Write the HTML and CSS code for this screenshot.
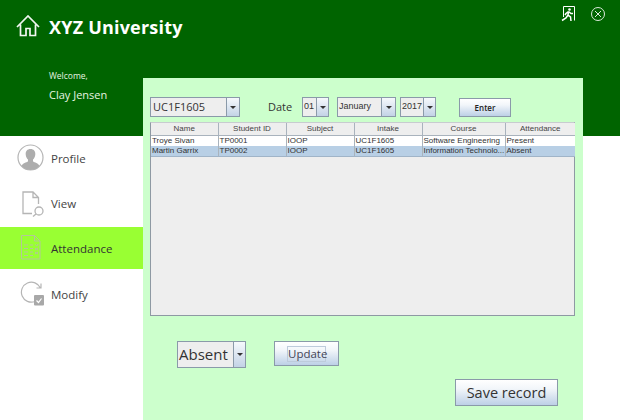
FILE: index.html
```html
<!DOCTYPE html>
<html lang="en">
<head>
<meta charset="utf-8">
<title>XYZ University</title>
<link rel="stylesheet" href="styles.css">
</head>
<body>
<div class="app">
  <header class="header">
    <div class="brand">
      <svg class="home" width="24" height="24" viewBox="0 0 24 24" fill="none" stroke="#f2f7f2" stroke-width="1.7"><path d="M1 12 12 1 23 12M4.500 9.500v11h5.500v-7h4v7h5.500v-11"/></svg>
      <h1 class="title">XYZ University</h1>
    </div>
    <div class="greeting">
      <div class="welcome">Welcome,</div>
      <div class="user">Clay Jensen</div>
    </div>
    <div class="window-icons">
      <svg width="14" height="16" viewBox="0 0 14 16" fill="none" stroke="#fff"><path d="M2.500 11V.5h11v14" /><circle cx="8.500" cy="3.500" r="1.300" fill="#fff" stroke="none"/><path d="M7.500 5.500 5 7.500l-1 1.500M7.500 5.500 7 9l2.500 2 .5 4M7 9l-2 3-4 2.500M7.500 5.500l2.500 2h2" stroke-width="1.500"/></svg>
      <svg width="14" height="14" viewBox="0 0 14 14" fill="none" stroke="#dbe9db"><circle cx="7" cy="7" r="6.500"/><path d="M4 4l6 6M10 4l-6 6"/></svg>
    </div>
  </header>
  <nav class="sidebar">
    <div class="nav-item nav-profile">
      <svg class="nav-icon" width="27" height="27" viewBox="0 0 27 27"><circle cx="13.500" cy="13.500" r="12.500" fill="#fff" stroke="#b5b5b5" stroke-width="1.200"/><path d="M13.500 5c3.500 0 5 2.600 4.800 5.500-.2 2.400-1.200 4-2.300 5v2c1.500 1 5.500 1.700 6.500 4.400a12 12 0 0 1-18 0c1-2.700 5-3.400 6.500-4.400v-2c-1.100-1-2.100-2.600-2.300-5C8.500 7.600 10 5 13.500 5z" fill="#adadad"/></svg>
      <span>Profile</span>
    </div>
    <div class="nav-item nav-view">
      <svg class="nav-icon" width="24" height="26" viewBox="0 0 24 26" fill="none" stroke="#b5b5b5" stroke-width="1.300"><path d="M10 22.500H1V1h10l5.500 5.500V13M11 1v5.500h5.500"/><circle cx="17" cy="20" r="4"/><path d="M14 23l-3 2.500"/></svg>
      <span>View</span>
    </div>
    <div class="nav-item nav-attendance active">
      <svg class="nav-icon" width="20" height="25" viewBox="0 0 20 25" fill="none" stroke="#b4c79a" stroke-width="1"><path d="M.500.500h13l5.500 5.500v18H.500zM13.500.500V6H19M3 10h4M9 10h3M3 13.500h4M9 13.500h3M3 17h4M9 17h3M3 20.500h4M9 20.500h3M14 9.500l2 1.500 1-2M14 13l3 2M17 13l-3 2M14 17l3 2M17 17l-3 2"/></svg>
      <span>Attendance</span>
    </div>
    <div class="nav-item nav-modify">
      <svg class="nav-icon" width="26" height="26" viewBox="0 0 26 26" fill="none"><path d="M16 20.500A10 10 0 1 1 21.500 7M17.500 7h4.500V2.500" stroke="#b5b5b5" stroke-width="1.200"/><rect x="15" y="14" width="10" height="10.500" rx="1" fill="#a8a8a8"/><path d="M17.500 19.500l2 2 3-4" stroke="#fff" stroke-width="1.200"/></svg>
      <span>Modify</span>
    </div>
  </nav>
  <main class="panel">
    <div class="toolbar">
      <div class="combo combo-course"><span class="combo-value">UC1F1605</span><span class="combo-arrow"></span></div>
      <span class="date-label">Date</span>
      <div class="combo combo-day"><span class="combo-value">01</span><span class="combo-arrow"></span></div>
      <div class="combo combo-month"><span class="combo-value">January</span><span class="combo-arrow"></span></div>
      <div class="combo combo-year"><span class="combo-value">2017</span><span class="combo-arrow"></span></div>
      <button class="btn btn-enter" type="button">Enter</button>
    </div>
    <div class="table-box">
      <table class="grid">
        <colgroup>
          <col class="c1"><col class="c2"><col class="c3"><col class="c4"><col class="c5"><col class="c6">
        </colgroup>
        <thead>
          <tr><th>Name</th><th>Student ID</th><th>Subject</th><th>Intake</th><th>Course</th><th>Attendance</th></tr>
        </thead>
        <tbody>
          <tr><td>Troye Sivan</td><td>TP0001</td><td>IOOP</td><td>UC1F1605</td><td>Software Engineering</td><td>Present</td></tr>
          <tr class="selected"><td>Martin Garrix</td><td>TP0002</td><td>IOOP</td><td>UC1F1605</td><td>Information Technolo...</td><td>Absent</td></tr>
        </tbody>
      </table>
    </div>
    <div class="update-row">
      <div class="combo combo-status"><span class="combo-value">Absent</span><span class="combo-arrow"></span></div>
      <button class="btn btn-update" type="button"><span class="focus">Update</span></button>
    </div>
    <div class="save-row">
      <button class="btn btn-save" type="button">Save record</button>
    </div>
  </main>
</div>
</body>
</html>
```
FILE: styles.css
```css
* { box-sizing: border-box; }
html, body { margin: 0; padding: 0; }
body { width: 620px; height: 420px; overflow: hidden; background: #fff; font-family: "Open Sans", "Noto Sans", sans-serif; }

.app { position: relative; width: 620px; height: 420px; display: grid; grid-template-rows: 136px 1fr; grid-template-columns: 143px 1fr; }

.header { grid-column: 1 / 3; background: #006400; color: #fff; position: relative; padding: 15px 0 0 16px; }
.brand { display: flex; align-items: center; gap: 9px; height: 24px; }
.home { flex: none; }
.title { margin: 0; font-size: 18px; font-weight: 700; line-height: 24px; letter-spacing: 0.2px; }
.greeting { margin: 30px 0 0 33px; color: #e6f5e0; }
.welcome { font-size: 8.500px; line-height: 14px; }
.user { font-size: 11px; line-height: 18px; margin-top: 3px; }
.window-icons { position: absolute; top: 6px; left: 561px; display: flex; gap: 16px; align-items: center; }

.sidebar { display: flex; flex-direction: column; background: #fff; }
.nav-item { display: flex; align-items: center; font-size: 11.500px; color: #444; position: relative; padding-left: 51px; }
.nav-icon { position: absolute; }
.nav-profile { height: 45px; }
.nav-profile .nav-icon { left: 17px; top: 8px; }
.nav-view { height: 46px; padding-bottom: 1px; }
.nav-view .nav-icon { left: 22px; top: 10px; }
.nav-attendance { height: 42px; padding-top: 1px; }
.nav-attendance .nav-icon { left: 21px; top: 8px; }
.nav-modify { height: 50px; }
.nav-modify .nav-icon { left: 19px; top: 12px; }
.active { background: #99ff33; color: #333; }

.panel { position: absolute; left: 143px; top: 78px; width: 440px; height: 342px; background: #ccffcc; padding: 19px 8px 0 7px; display: flex; flex-direction: column; }

.toolbar { display: flex; align-items: flex-start; height: 25px; }
.combo { display: flex; border: 1px solid #8a9aa9; background: #eeeeee; color: #333; flex: none; }
.combo-value { flex: 1; display: block; overflow: hidden; white-space: nowrap; font-family: "Open Sans", sans-serif; }
.combo-arrow { flex: none; display: flex; align-items: center; justify-content: center; border-left: 1px solid #8a9aa9; background: linear-gradient(#f6f9fc, #c3d3e6); width: 12px; }
.combo-arrow::after { content: ""; border: 3px solid transparent; border-top: 3px solid #333; border-bottom: 0; }
.combo-course { width: 90px; height: 20px; }
.combo-course .combo-value { font-size: 11px; line-height: 18px; padding-left: 2px; }
.combo-course .combo-arrow { width: 13px; }
.date-label { font-size: 11px; line-height: 20px; color: #333; margin-left: 28px; width: 34px; }
.combo-day { width: 27px; height: 20px; }
.combo-month { width: 59px; height: 20px; margin-left: 8px; }
.combo-year { width: 36px; height: 20px; margin-left: 4px; }
.combo-day .combo-value, .combo-month .combo-value, .combo-year .combo-value { font-family: "Liberation Sans", sans-serif; font-size: 9px; line-height: 16px; padding-left: 1px; }
.combo-month .combo-arrow { width: 14px; margin-left: auto; }
.combo-day .combo-arrow, .combo-year .combo-arrow { width: 12px; }

.btn { display: block; border: 1px solid #8a9aa9; background: linear-gradient(#ffffff 0%, #f2f6fa 35%, #bdd0e6 100%); color: #333; padding: 0; font-family: "Open Sans", sans-serif; }
.btn-enter { width: 52px; height: 19px; margin-left: 23px; margin-top: 1px; font-size: 8px; font-weight: 600; color: #222; }

.table-box { width: 425px; height: 194px; border: 1px solid #8e99a3; border-top-color: #c8ccd0; background: #eeeeee; }
.grid { border-collapse: collapse; table-layout: fixed; width: 424px; font-family: "Liberation Sans", sans-serif; font-size: 8px; color: #333; }
.c1 { width: 67px; }
.c2, .c3, .c4 { width: 68px; }
.c5 { width: 83px; }
.c6 { width: 70px; }
.grid th { height: 12px; padding: 0; font-weight: 400; text-align: center; background: #eeeeee; border-right: 1px solid #a9b3bd; border-bottom: 1px solid #a9b3bd; line-height: 11px; color: #444; }
.grid td { height: 10px; padding: 0 0 0 1px; background: #fff; border-right: 1px solid #a9b3bd; line-height: 10px; white-space: nowrap; overflow: hidden; }
.grid tr.selected td { background: #b8cfe5; border-bottom: 1px solid #a0b4c8; }
.grid th:last-child, .grid td:last-child { border-right: 0; }

.update-row { display: flex; align-items: flex-start; margin-top: 25px; margin-left: 27px; }
.combo-status { width: 69px; height: 27px; }
.combo-status .combo-value { font-size: 15px; line-height: 25px; padding-left: 1px; }
.btn-update { width: 65px; height: 25px; margin-left: 28px; font-size: 11.500px; display: flex; align-items: center; justify-content: center; }
.focus { border: 1px solid #bdcbdb; line-height: 14px; height: 16px; padding: 0 0; width: 39px; display: block; color: #445; }

.save-row { display: flex; justify-content: flex-end; margin-top: 11px; padding-right: 17px; }
.btn-save { width: 103px; height: 27px; font-size: 14.500px; line-height: 23px; }
```
